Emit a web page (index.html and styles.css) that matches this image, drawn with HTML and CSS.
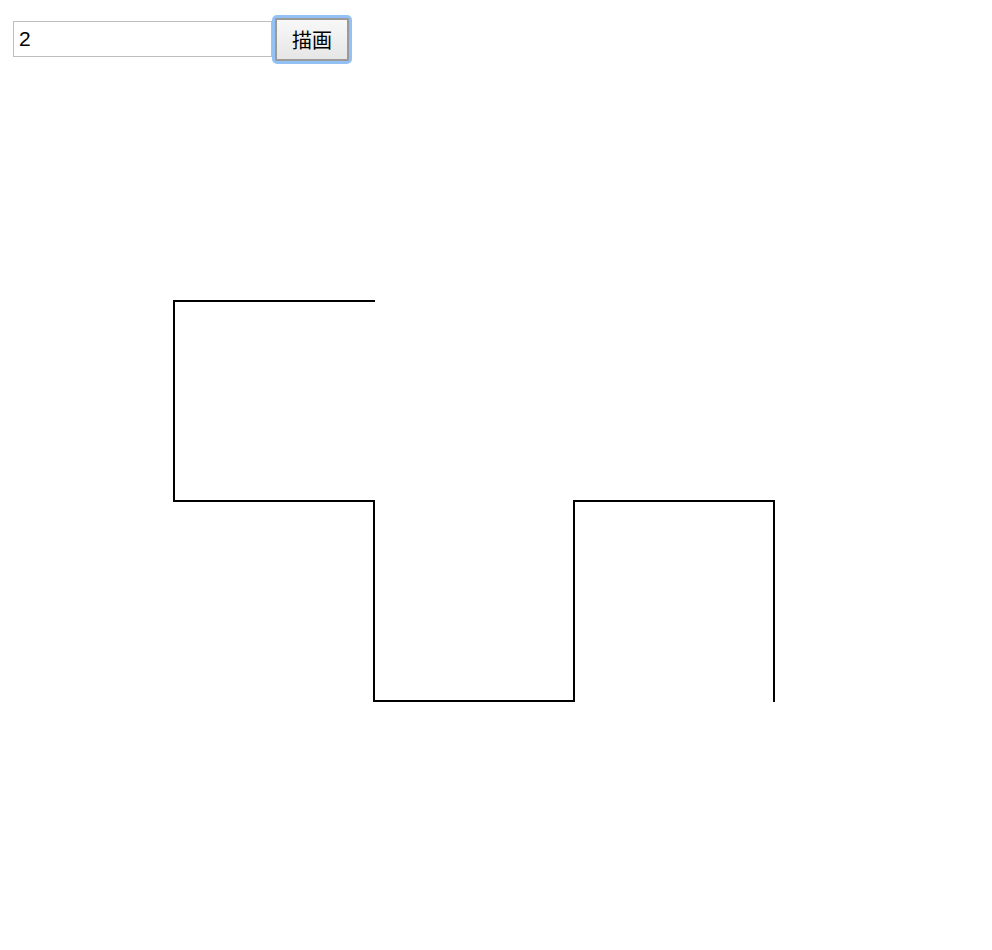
FILE: index.html
```html
<!DOCTYPE html>
<html>
<head>
<meta charset="utf-8">
<link rel="stylesheet" href="styles.css">
</head>
<body>
<div class="bar">
  <input class="num" type="text" value="2">
  <div class="ring"><button class="draw">描画</button></div>
</div>
<svg class="canvas" width="992" height="886" viewBox="0 64 992 886">
  <path d="M375,301 H174 V501 H374 V701 H574 V501 H774 V702" fill="none" stroke="#000" stroke-width="2"/>
</svg>
</body>
</html>
```
FILE: styles.css
```css
html, body {
  margin: 0;
  padding: 0;
  background: #fff;
  font-family: "Liberation Sans", Arial, "Noto Sans CJK JP", sans-serif;
}
.bar {
  display: flex;
  align-items: flex-start;
  padding: 15px 0 0 13px;
  height: 49px;
  box-sizing: content-box;
}
.num {
  margin: 6px 0 0 0;
  width: 259px;
  height: 36px;
  box-sizing: border-box;
  border: 1px solid #bdbdbd;
  padding: 0 0 0 5px;
  font-family: "Liberation Sans", Arial, sans-serif;
  font-size: 21px;
  color: #000;
  outline: none;
}
.ring {
  width: 80px;
  height: 49px;
  box-sizing: border-box;
  border: 3px solid #93c1f6;
  border-radius: 5px;
  padding: 0;
}
.draw {
  display: block;
  width: 100%;
  height: 100%;
  margin: 0;
  box-sizing: border-box;
  border: 2px solid #9a9a9a;
  border-radius: 1px;
  background: linear-gradient(#f8f8f8, #e6e6e6);
  font-family: "Noto Sans CJK JP", sans-serif;
  font-size: 20px;
  color: #000;
  padding: 0;
}
.canvas {
  display: block;
}
```
